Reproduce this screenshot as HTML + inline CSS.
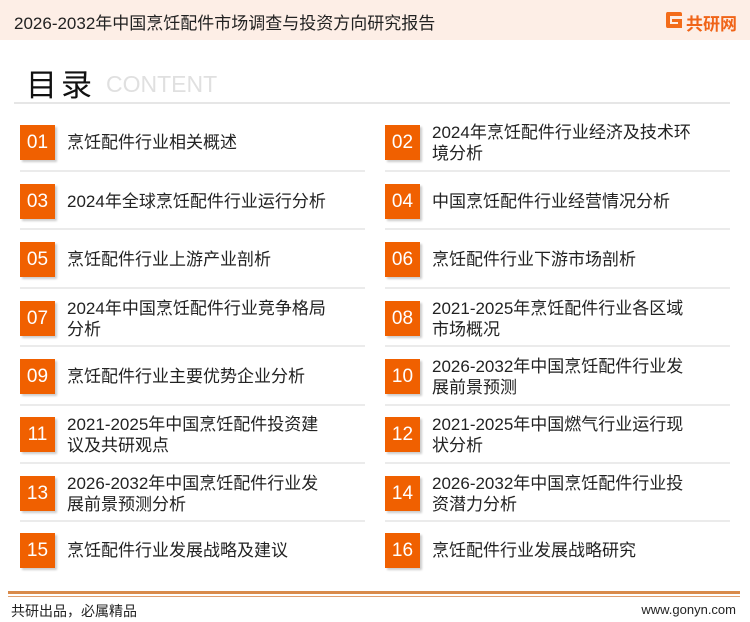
<!DOCTYPE html>
<html><head><meta charset="utf-8"><style>
*{margin:0;padding:0;box-sizing:border-box}
body{width:750px;height:622px;background:#fff;position:relative;overflow:hidden;font-family:"Liberation Sans","Noto Sans CJK SC",sans-serif;color:#222}
.hdr{position:absolute;left:0;top:0;width:750px;height:40px;background:#fdeee6}
.ttl{position:absolute;left:14px;top:9px;font-size:17px;color:#222}
.logo{position:absolute;left:686px;top:10px;font-size:17px;font-weight:bold;color:#f06418}
.lg{position:absolute;left:666px;top:12px;width:16px;height:16px;border:4px solid #f36c1a;border-right:none;border-radius:2px}
.lg2{position:absolute;left:672px;top:19px;width:10px;height:9px;border-top:3px solid #f36c1a;border-right:4px solid #f36c1a}
.mulu{position:absolute;left:26px;top:60px;font-size:31px;color:#111;letter-spacing:4px}
.cont{position:absolute;left:106px;top:71px;font-size:23px;color:#e0e0e0}
.l1{position:absolute;left:14px;top:102px;width:716px;height:2px;background:#e6e6e6}
.it{position:absolute;height:35px}
.n{position:absolute;left:0;top:0;width:35px;height:35px;background:#f06000;color:#fff;font-size:19px;text-align:center;line-height:35px;box-shadow:2px 2px 2px #ccc}
.t{position:absolute;left:47px;font-size:17px;line-height:21px;white-space:nowrap;color:#222}
.sep{position:absolute;height:2px;background:#ebebeb}
.f1{position:absolute;left:8px;top:591px;width:732px;height:3px;background:#d98a4a}
.f2{position:absolute;left:8px;top:596px;width:732px;height:1px;background:#e0a070}
.ft{position:absolute;top:601px;font-size:14px;color:#222}
</style></head><body>
<div class="hdr"></div>
<div class="ttl">2026-2032年中国烹饪配件市场调查与投资方向研究报告</div>
<div class="lg"></div><div class="lg2"></div>
<div class="logo">共研网</div>
<div class="mulu">目录</div>
<div class="cont">CONTENT</div>
<div class="l1"></div>

<div class="it" style="left:20px;top:125px"><div class="n">01</div><div class="t" style="top:7px">烹饪配件行业相关概述</div></div>
<div class="it" style="left:385px;top:125px"><div class="n">02</div><div class="t" style="top:-3px">2024年烹饪配件行业经济及技术环<br>境分析</div></div>
<div class="it" style="left:20px;top:184px"><div class="n">03</div><div class="t" style="top:7px">2024年全球烹饪配件行业运行分析</div></div>
<div class="it" style="left:385px;top:184px"><div class="n">04</div><div class="t" style="top:7px">中国烹饪配件行业经营情况分析</div></div>
<div class="it" style="left:20px;top:242px"><div class="n">05</div><div class="t" style="top:7px">烹饪配件行业上游产业剖析</div></div>
<div class="it" style="left:385px;top:242px"><div class="n">06</div><div class="t" style="top:7px">烹饪配件行业下游市场剖析</div></div>
<div class="it" style="left:20px;top:301px"><div class="n">07</div><div class="t" style="top:-3px">2024年中国烹饪配件行业竞争格局<br>分析</div></div>
<div class="it" style="left:385px;top:301px"><div class="n">08</div><div class="t" style="top:-3px">2021-2025年烹饪配件行业各区域<br>市场概况</div></div>
<div class="it" style="left:20px;top:359px"><div class="n">09</div><div class="t" style="top:7px">烹饪配件行业主要优势企业分析</div></div>
<div class="it" style="left:385px;top:359px"><div class="n">10</div><div class="t" style="top:-3px">2026-2032年中国烹饪配件行业发<br>展前景预测</div></div>
<div class="it" style="left:20px;top:417px"><div class="n">11</div><div class="t" style="top:-3px">2021-2025年中国烹饪配件投资建<br>议及共研观点</div></div>
<div class="it" style="left:385px;top:417px"><div class="n">12</div><div class="t" style="top:-3px">2021-2025年中国燃气行业运行现<br>状分析</div></div>
<div class="it" style="left:20px;top:476px"><div class="n">13</div><div class="t" style="top:-3px">2026-2032年中国烹饪配件行业发<br>展前景预测分析</div></div>
<div class="it" style="left:385px;top:476px"><div class="n">14</div><div class="t" style="top:-3px">2026-2032年中国烹饪配件行业投<br>资潜力分析</div></div>
<div class="it" style="left:20px;top:533px"><div class="n">15</div><div class="t" style="top:7px">烹饪配件行业发展战略及建议</div></div>
<div class="it" style="left:385px;top:533px"><div class="n">16</div><div class="t" style="top:7px">烹饪配件行业发展战略研究</div></div>

<div class="sep" style="left:20px;top:170px;width:345px"></div><div class="sep" style="left:385px;top:170px;width:345px"></div>
<div class="sep" style="left:20px;top:228px;width:345px"></div><div class="sep" style="left:385px;top:228px;width:345px"></div>
<div class="sep" style="left:20px;top:287px;width:345px"></div><div class="sep" style="left:385px;top:287px;width:345px"></div>
<div class="sep" style="left:20px;top:345px;width:345px"></div><div class="sep" style="left:385px;top:345px;width:345px"></div>
<div class="sep" style="left:20px;top:404px;width:345px"></div><div class="sep" style="left:385px;top:404px;width:345px"></div>
<div class="sep" style="left:20px;top:462px;width:345px"></div><div class="sep" style="left:385px;top:462px;width:345px"></div>
<div class="sep" style="left:20px;top:520px;width:345px"></div><div class="sep" style="left:385px;top:520px;width:345px"></div>

<div class="f1"></div><div class="f2"></div>
<div class="ft" style="left:11px">共研出品，必属精品</div>
<div class="ft" style="right:14px;font-size:13px;top:602px">www.gonyn.com</div>
</body></html>
